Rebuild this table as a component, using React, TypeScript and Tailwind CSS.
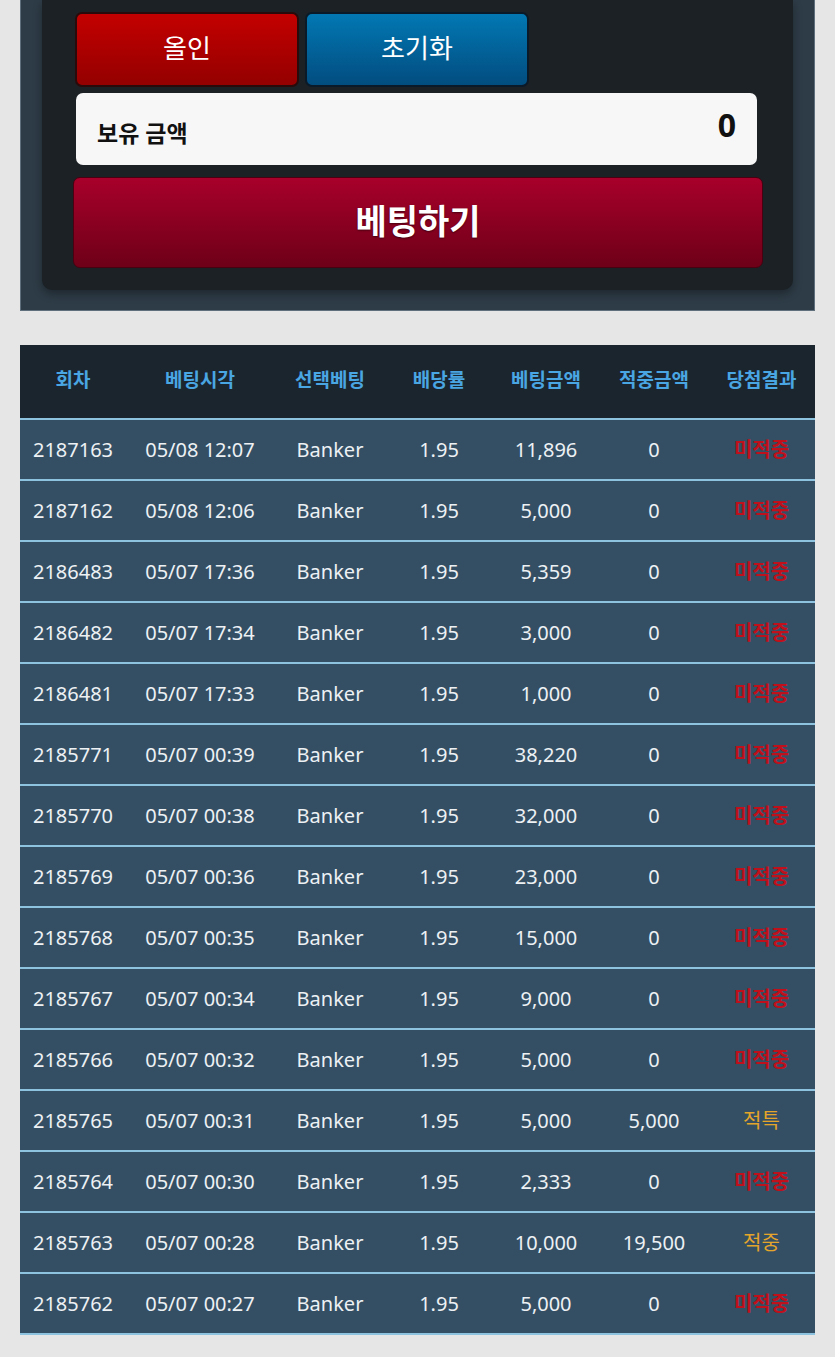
import React from "react";

const rows = [
  ["2187163", "05/08 12:07", "11,896", "0", "미적중"],
  ["2187162", "05/08 12:06", "5,000", "0", "미적중"],
  ["2186483", "05/07 17:36", "5,359", "0", "미적중"],
  ["2186482", "05/07 17:34", "3,000", "0", "미적중"],
  ["2186481", "05/07 17:33", "1,000", "0", "미적중"],
  ["2185771", "05/07 00:39", "38,220", "0", "미적중"],
  ["2185770", "05/07 00:38", "32,000", "0", "미적중"],
  ["2185769", "05/07 00:36", "23,000", "0", "미적중"],
  ["2185768", "05/07 00:35", "15,000", "0", "미적중"],
  ["2185767", "05/07 00:34", "9,000", "0", "미적중"],
  ["2185766", "05/07 00:32", "5,000", "0", "미적중"],
  ["2185765", "05/07 00:31", "5,000", "5,000", "적특"],
  ["2185764", "05/07 00:30", "2,333", "0", "미적중"],
  ["2185763", "05/07 00:28", "10,000", "19,500", "적중"],
  ["2185762", "05/07 00:27", "5,000", "0", "미적중"],
];

const headers = ["회차", "베팅시각", "선택베팅", "배당률", "베팅금액", "적중금액", "당첨결과"];

const cols = "grid grid-cols-[106px_148px_112px_106px_108px_108px_107px]";

const App = () => {
  return (
    <div
      className="min-h-[1357px] bg-[#e6e6e6] pb-6"
      style={{ fontFamily: '"Noto Sans", "Noto Sans CJK KR", sans-serif' }}
    >
      {/* betting panel */}
      <div className="mx-[20px] h-[311px] bg-[#2e3c47] border-x border-b border-[#5f707c] px-[21px]">
        <div className="h-[290px] rounded-b-[10px] bg-[#1b2125] shadow-[0_4px_8px_rgba(0,0,0,0.35)] pt-[12px] px-[31px]">
          <div className="flex gap-[6px] ml-[2px]">
            <button className="w-[224px] h-[75px] rounded-[7px] border-2 border-[#2a0a0a] bg-gradient-to-b from-[#c40000] to-[#940000] text-white text-[26px] pb-[2px]">
              올인
            </button>
            <button className="w-[224px] h-[75px] rounded-[7px] border-2 border-[#0a1a28] bg-gradient-to-b from-[#0278b3] to-[#024d80] text-white text-[26px] pb-[2px]">
              초기화
            </button>
          </div>
          <div className="mt-[6px] ml-[3px] w-[681px] h-[72px] rounded-[7px] bg-[#f7f7f7] flex items-center justify-between px-[21px]">
            <span className="text-[23px] font-bold text-[#111] pt-[8px]">보유 금액</span>
            <span className="text-[32px] font-bold text-[#111] pb-[8px]">0</span>
          </div>
          <button className="mt-[12px] w-[690px] h-[91px] rounded-[7px] border border-[#4a0010] bg-gradient-to-b from-[#a8002a] to-[#6e0018] text-white text-[34px] font-bold pb-[2px] [text-shadow:0_1px_2px_rgba(0,0,0,0.5)]">
            베팅하기
          </button>
        </div>
      </div>

      {/* history table */}
      <div className="mx-[20px] mt-[34px] bg-[#344f64]">
        <div className={`${cols} h-[73px] bg-[#1b252e] items-center text-center`}>
          {headers.map((h) => (
            <div key={h} className="text-[19px] font-bold text-[#4aa6e2] pb-[2px]">
              {h}
            </div>
          ))}
        </div>
        {rows.map((r) => {
          const color =
            r[4] === "미적중" ? "text-[#c0101c] font-bold" : "text-[#e4a52a]";
          return (
            <div
              key={r[0]}
              className={`${cols} h-[61px] border-t-2 border-[#8ec3df] items-center text-center text-[20px] text-[#edf1f4]`}
            >
              <div>{r[0]}</div>
              <div>{r[1]}</div>
              <div>Banker</div>
              <div>1.95</div>
              <div>{r[2]}</div>
              <div>{r[3]}</div>
              <div className={color}>{r[4]}</div>
            </div>
          );
        })}
        <div className="h-[2px] bg-[#8ec3df]" />
      </div>
    </div>
  );
};

export default App;
